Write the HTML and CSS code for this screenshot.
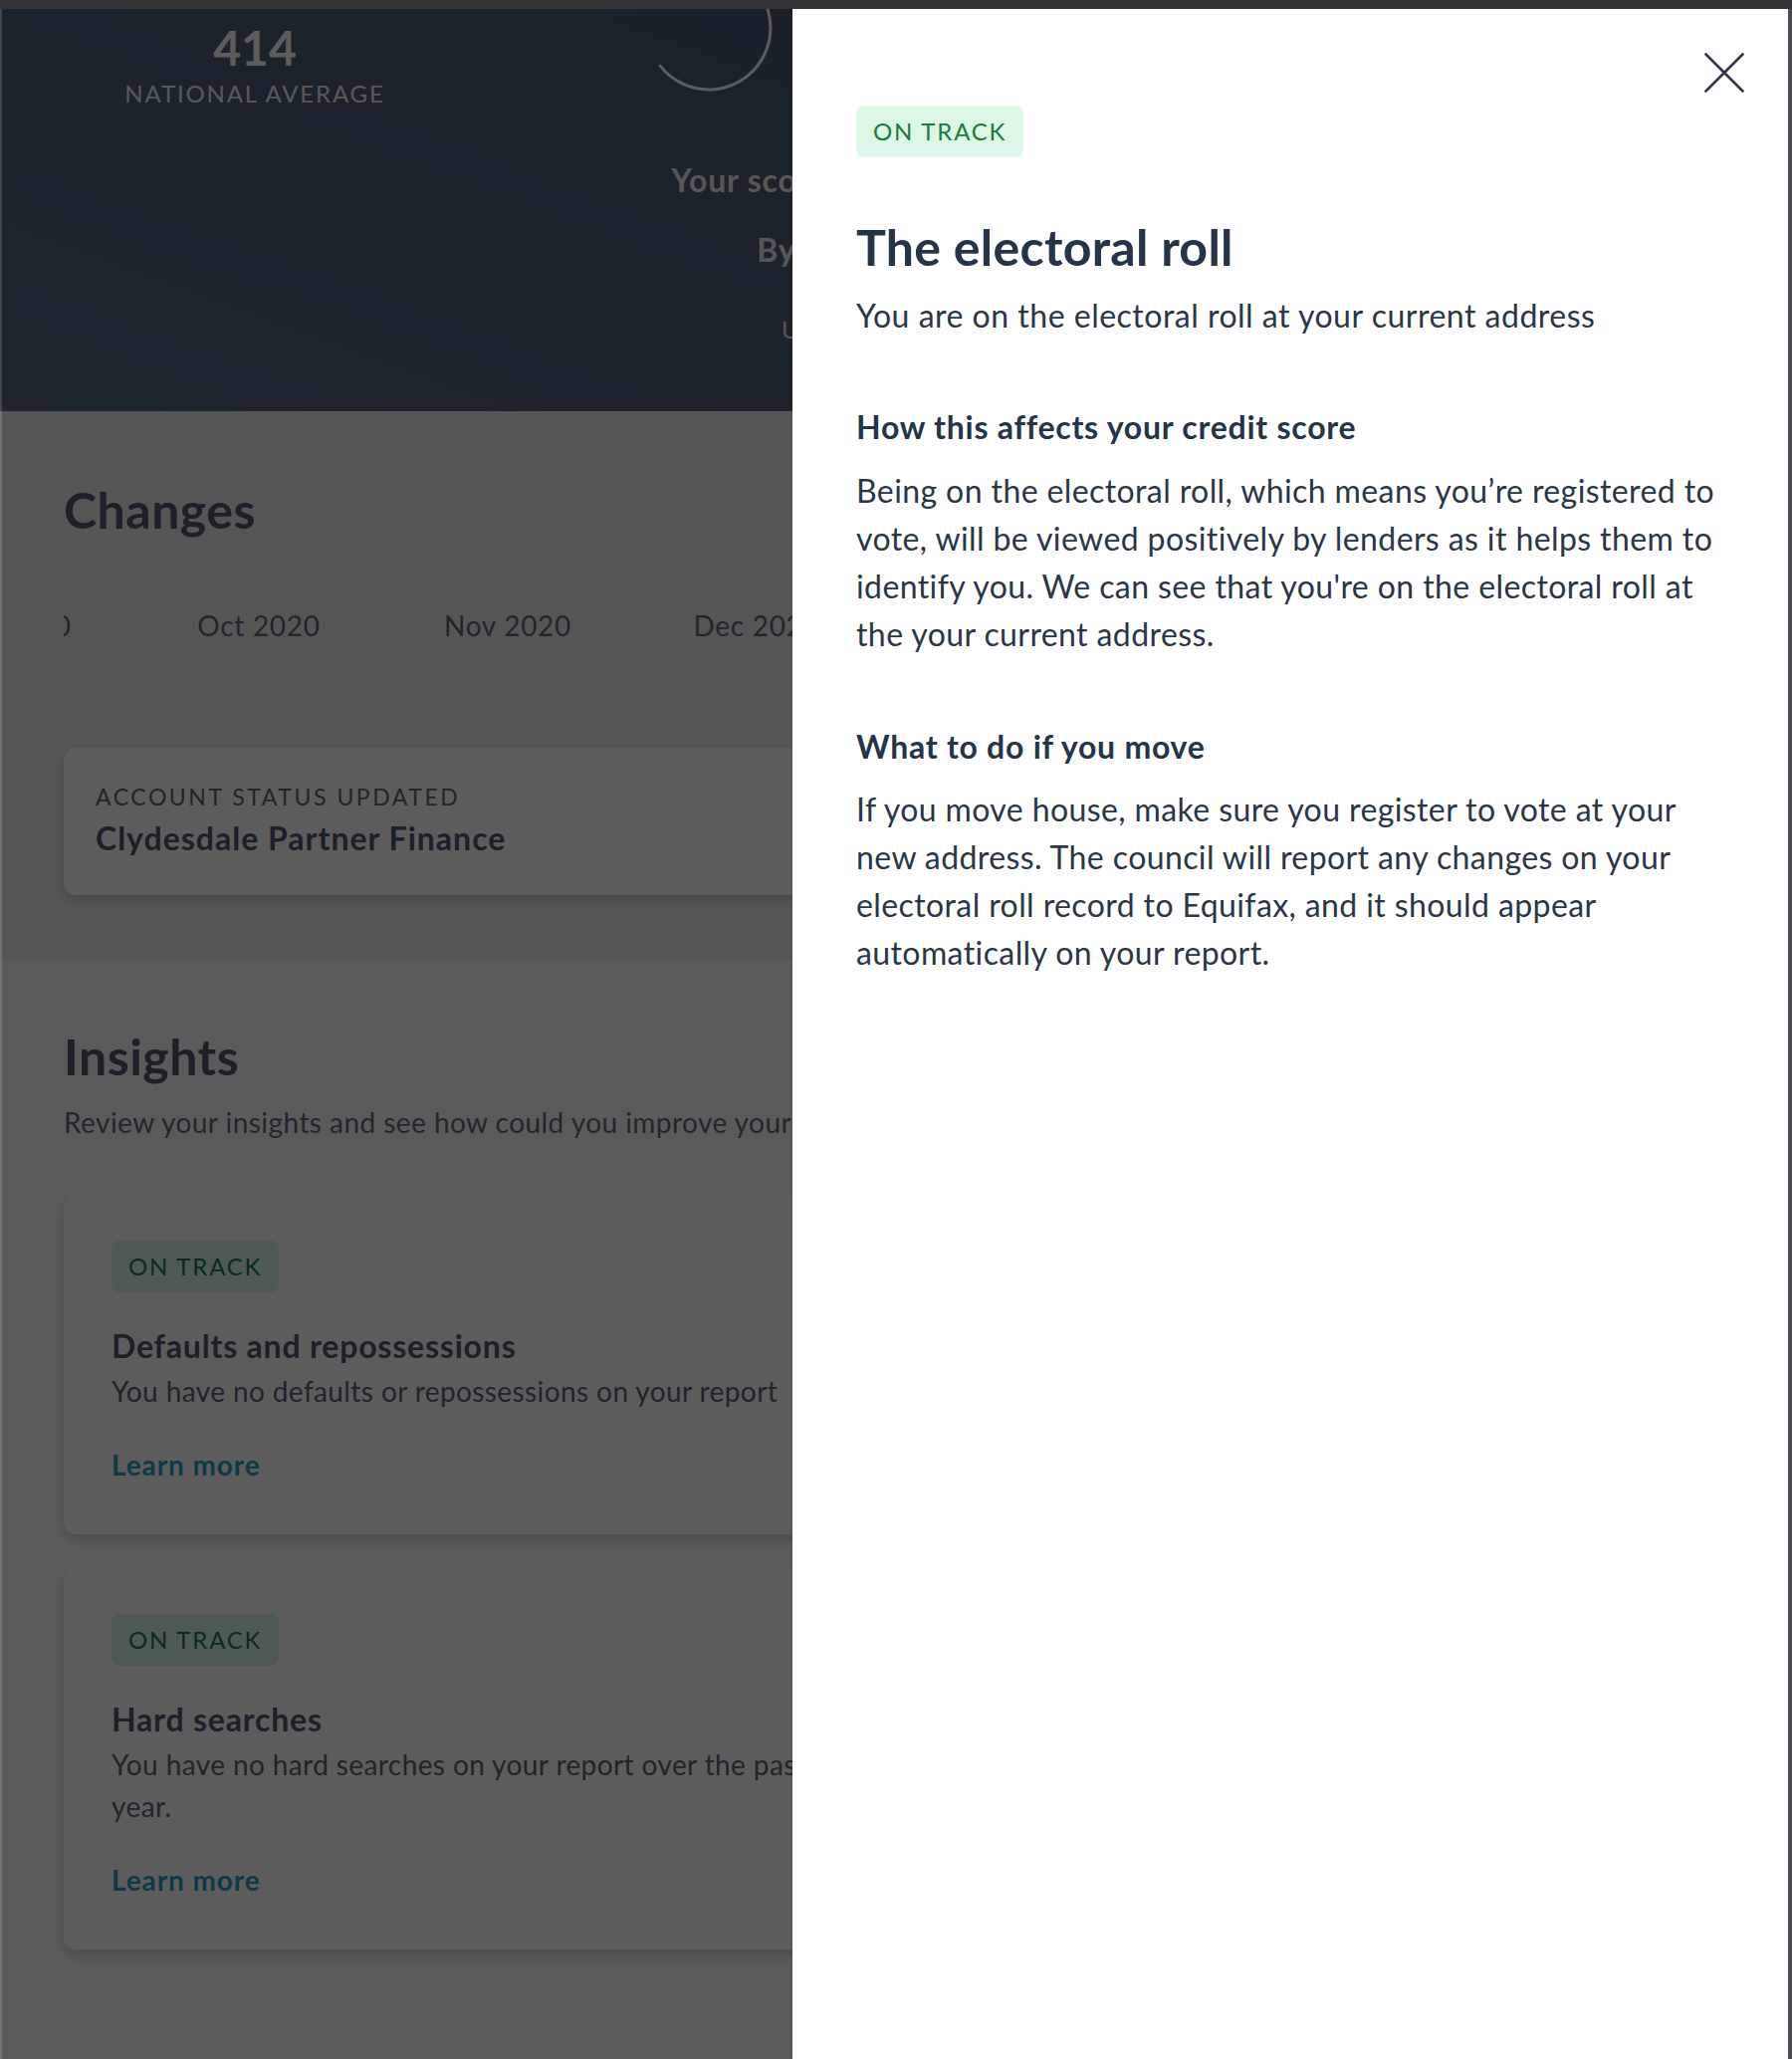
FILE: index.html
```html
<!DOCTYPE html>
<html lang="en">
<head>
<meta charset="utf-8">
<title>Credit report – The electoral roll</title>
<link rel="stylesheet" href="styles.css">
</head>
<body>
<div class="window">
  <div class="screen">
    <main class="page">
      <section class="hero">
        <div class="hero-inner">
          <div class="avg">
            <div class="avg-num">414</div>
            <div class="avg-label">NATIONAL AVERAGE</div>
          </div>
          <div class="score">
            <svg class="gauge" width="150" height="150" viewBox="0 0 150 150" aria-hidden="true">
              <path d="M75 13 A62 62 0 1 1 26.1 113.2" fill="none" stroke="#ffffff" stroke-width="3" stroke-linecap="round"/>
            </svg>
            <p class="score-title">Your score is looking excellent</p>
            <p class="score-by">By Equifax UK Ltd.</p>
            <p class="score-updated">Updated 2 Dec 2020</p>
          </div>
        </div>
      </section>

      <section class="changes">
        <h2 class="section-title">Changes</h2>
        <div class="timeline">
          <div class="timeline-track">
            <span>Sep 2020</span>
            <span>Oct 2020</span>
            <span>Nov 2020</span>
            <span>Dec 2020</span>
          </div>
        </div>
        <div class="card change-card">
          <div class="change-label">ACCOUNT STATUS UPDATED</div>
          <div class="change-name">Clydesdale Partner Finance</div>
        </div>
      </section>

      <section class="insights">
        <h2 class="section-title">Insights</h2>
        <p class="lead">Review your insights and see how could you improve your score</p>
        <div class="insight-list">
          <article class="card insight">
            <span class="badge">ON TRACK</span>
            <h3 class="insight-title">Defaults and repossessions</h3>
            <p class="insight-desc">You have no defaults or repossessions on your report</p>
            <a class="learn" href="#">Learn more</a>
          </article>
          <article class="card insight">
            <span class="badge">ON TRACK</span>
            <h3 class="insight-title">Hard searches</h3>
            <p class="insight-desc">You have no hard searches on your report over the past year.</p>
            <a class="learn" href="#">Learn more</a>
          </article>
        </div>
      </section>
    </main>

    <div class="backdrop"></div>

    <aside class="drawer">
      <button class="close" type="button" aria-label="Close">
        <svg width="40" height="40" viewBox="0 0 40 40" aria-hidden="true">
          <path d="M1.5 1.5 L38.5 38.5 M38.5 1.5 L1.5 38.5" stroke="#2a3646" stroke-width="2.6" stroke-linecap="round" fill="none"/>
        </svg>
      </button>
      <span class="badge">ON TRACK</span>
      <h1 class="drawer-title">The electoral roll</h1>
      <p class="drawer-sub">You are on the electoral roll at your current address</p>
      <h3 class="drawer-h">How this affects your credit score</h3>
      <p class="drawer-p">Being on the electoral roll, which means you’re registered to vote, will be viewed positively by lenders as it helps them to identify you. We can see that you're on the electoral roll at the your current address.</p>
      <h3 class="drawer-h drawer-h2">What to do if you move</h3>
      <p class="drawer-p drawer-p2">If you move house, make sure you register to vote at your new address. The council will report any changes on your electoral roll record to Equifax, and it should appear automatically on your report.</p>
    </aside>
  </div>
</div>
</body>
</html>
```

FILE: styles.css
```css
* {
  box-sizing: border-box;
  margin: 0;
  padding: 0;
}

html, body {
  width: 1800px;
  height: 2068px;
}

body {
  background: #333437;
  font-family: Lato, "Open Sans", "Liberation Sans", sans-serif;
  overflow: hidden;
}

.window {
  padding-top: 9px;
  width: 1800px;
  height: 2068px;
}

.screen {
  position: relative;
  width: 1800px;
  height: 2059px;
  overflow: hidden;
  border-right: 4px solid #4a4b4e;
}

.screen::after {
  content: "";
  position: absolute;
  left: 0;
  top: 0;
  bottom: 0;
  width: 2px;
  background: rgba(255, 255, 255, 0.16);
  z-index: 5;
}

/* ---------- page underneath ---------- */
.page {
  width: 1796px;
}

.hero {
  height: 404px;
  overflow: hidden;
  background: linear-gradient(200deg, #455970 0%, #4b5f76 55%, #53677e 100%);
}

.hero-inner {
  display: flex;
  align-items: flex-start;
}

.avg {
  width: 512px;
  padding-top: 11px;
  text-align: center;
  color: #ffffff;
}

.avg-num {
  font-size: 48px;
  font-weight: 700;
  line-height: 56px;
}

.avg-label {
  margin-top: 2px;
  font-size: 24px;
  line-height: 32px;
  letter-spacing: 1.85px;
  color: #f2f4f7;
}

.score {
  width: 776px;
  display: flex;
  flex-direction: column;
  align-items: center;
  color: #eceff3;
}

.gauge {
  align-self: flex-start;
  margin-left: 125px;
  margin-top: -56px;
  display: block;
}

.score-title {
  margin-top: 58px;
  font-size: 32px;
  font-weight: 700;
  line-height: 40px;
  letter-spacing: 0.8px;
}

.score-by {
  margin-top: 30px;
  font-size: 32px;
  font-weight: 700;
  line-height: 40px;
  letter-spacing: 0.8px;
}

.score-updated {
  margin-top: 44px;
  font-size: 24px;
  line-height: 32px;
  letter-spacing: 0.5px;
}

.section-title {
  font-size: 50px;
  font-weight: 700;
  line-height: 56px;
  letter-spacing: 0.5px;
  color: #4b5972;
}

.changes {
  background: #ececec;
  padding: 71px 64px 64px;
}

.timeline {
  margin-top: 68px;
  overflow: hidden;
}

.timeline-track {
  display: flex;
  margin-left: -179px;
}

.timeline-track span {
  flex: none;
  width: 250px;
  text-align: center;
  font-size: 28px;
  line-height: 40px;
  letter-spacing: 0.7px;
  color: #5c687b;
}

.card {
  width: 820px;
  background: #ffffff;
  border-radius: 12px;
  box-shadow: 0 6px 14px rgba(0, 0, 0, 0.16);
}

.change-card {
  margin-top: 103px;
  padding: 35px 32px 39px;
}

.change-label {
  font-size: 23px;
  line-height: 28px;
  letter-spacing: 2.55px;
  color: #5e6470;
}

.change-name {
  margin-top: 10px;
  font-size: 32px;
  font-weight: 700;
  line-height: 36px;
  letter-spacing: 1px;
  color: #4b5972;
}

.insights {
  background: #fafafa;
  padding: 70px 64px 120px;
}

.lead {
  margin-top: 18px;
  font-size: 28px;
  line-height: 40px;
  letter-spacing: 0.45px;
  color: #5e6a7d;
}

.insight-list {
  margin-top: 52px;
  display: flex;
  flex-direction: column;
  gap: 33px;
}

.insight {
  display: flex;
  flex-direction: column;
  align-items: flex-start;
  padding: 47px 48px 49px;
}

.badge {
  display: inline-flex;
  align-items: center;
  height: 52px;
  padding: 0 17px 2px;
  border-radius: 8px;
  background: #dcf7e6;
  color: #1e7a3e;
  font-size: 24px;
  letter-spacing: 1.8px;
}

.insight-title {
  margin-top: 34px;
  font-size: 32px;
  font-weight: 700;
  line-height: 40px;
  letter-spacing: 0.8px;
  color: #4b5972;
}

.insight-desc {
  margin-top: 4px;
  font-size: 28px;
  line-height: 42px;
  letter-spacing: 0.4px;
  color: #5b6578;
}

.learn {
  margin-top: 32px;
  font-size: 28px;
  font-weight: 700;
  line-height: 42px;
  letter-spacing: 0.9px;
  color: #2c9cc4;
  text-decoration: none;
}

/* ---------- modal ---------- */
.backdrop {
  position: absolute;
  inset: 0;
  background: rgba(0, 0, 0, 0.64);
  z-index: 2;
}

.drawer {
  position: absolute;
  top: 0;
  left: 796px;
  width: 1000px;
  height: 100%;
  background: #ffffff;
  padding: 97px 56px 0 64px;
  display: flex;
  flex-direction: column;
  align-items: flex-start;
  z-index: 3;
  color: #2a3646;
}

.close {
  position: absolute;
  top: 44px;
  right: 44px;
  width: 40px;
  height: 40px;
  border: 0;
  background: none;
  display: block;
  cursor: pointer;
}

.close svg {
  display: block;
}

.drawer-title {
  margin-top: 62px;
  font-size: 50px;
  font-weight: 700;
  line-height: 56px;
  letter-spacing: 0.3px;
  color: #263447;
}

.drawer-sub {
  margin-top: 21px;
  font-size: 32px;
  line-height: 40px;
  letter-spacing: 0.5px;
}

.drawer-h {
  margin-top: 72px;
  font-size: 32px;
  font-weight: 700;
  line-height: 40px;
  letter-spacing: 0.75px;
  color: #263447;
}

.drawer-h2 {
  margin-top: 69px;
}

.drawer-p {
  margin-top: 20px;
  font-size: 32px;
  line-height: 48px;
  letter-spacing: 0.4px;
}

.drawer-p2 {
  margin-top: 19px;
}
```
